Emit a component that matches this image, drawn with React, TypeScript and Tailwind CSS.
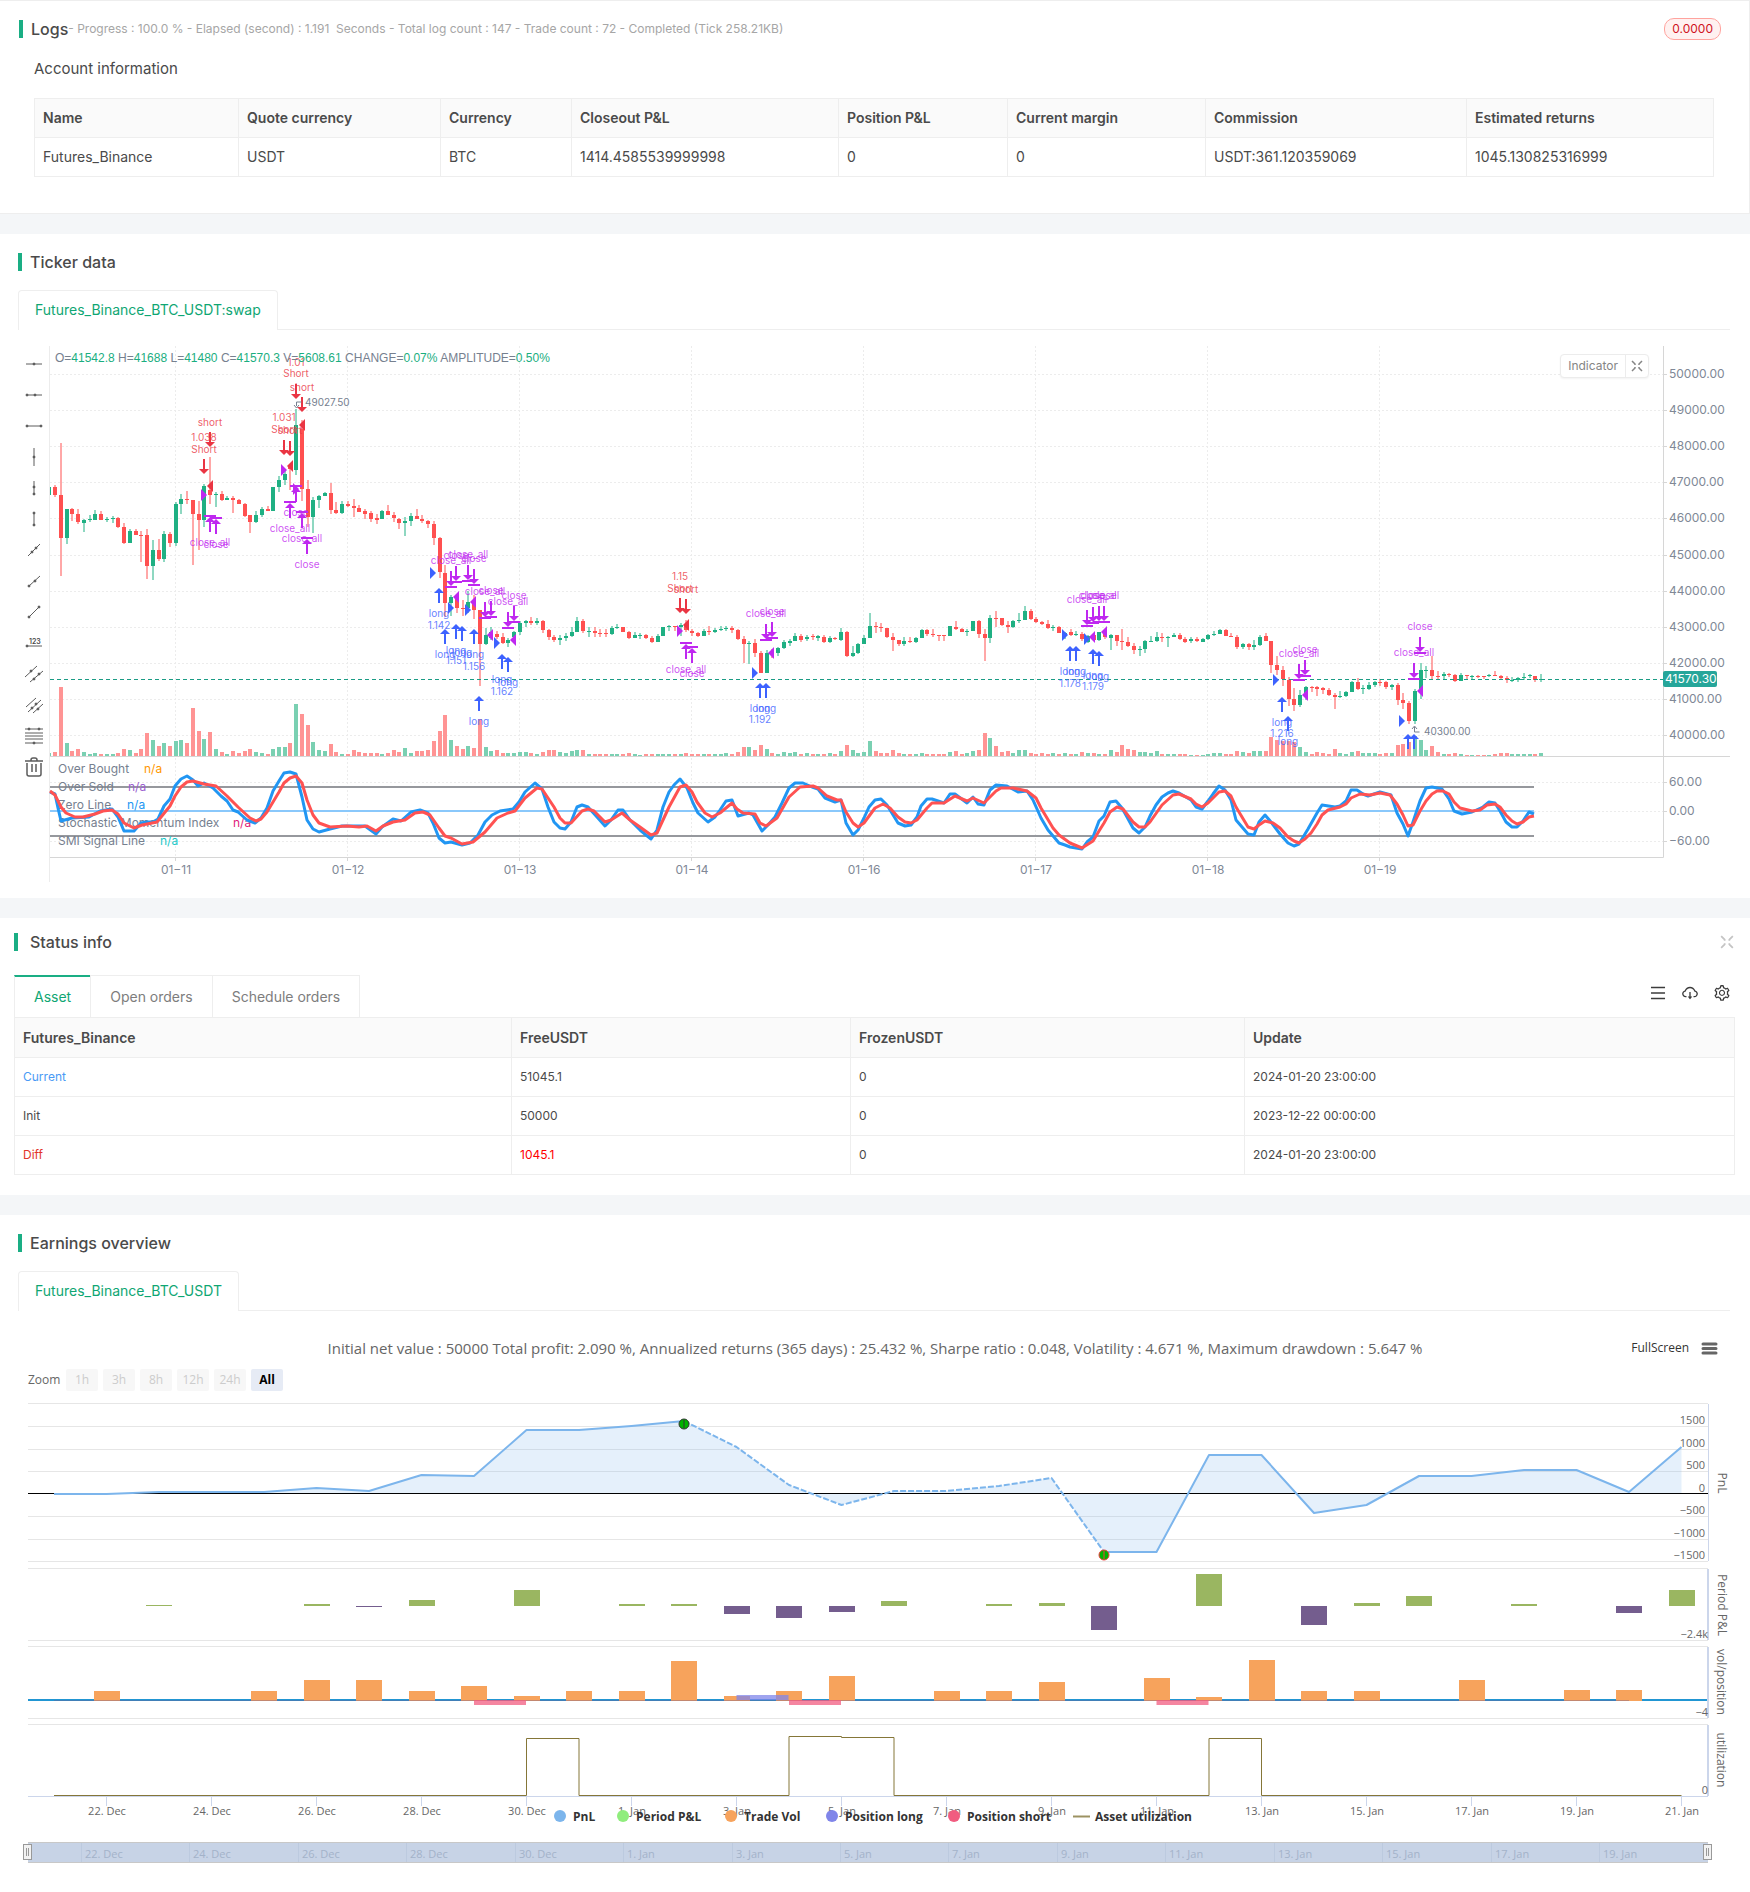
import { ReactNode } from "react";
import {
  AiOutlineCloudDownload,
  AiOutlineMenu,
  AiOutlineSetting,
} from "react-icons/ai";

type Candle = [
  up: number,
  high: number,
  top: number,
  bottom: number,
  low: number,
  volume: number
];

type Signal = {
  x: number;
  y: number;
  kind: "short" | "long" | "closeUp" | "closeDown";
  labels: [string, number][];
};

const CANDLE_STEP = 5.737;
const CANDLE_START = 49.5;
const VOLUME_BASE = 416;

const candles: Candle[] = [
  [1, 147, 147, 155, 155, 3], [0, 145, 147, 155, 157, 4], [0, 103, 155, 198, 236, 69], [1, 169, 169, 198, 204, 13],
  [0, 168, 169, 174, 181, 5], [0, 169, 174, 182, 184, 7], [1, 179, 180, 183, 192, 4], [1, 175, 179, 180, 182, 2],
  [1, 170, 174, 180, 180, 3], [0, 171, 174, 180, 180, 2], [1, 177, 179, 180, 182, 2], [1, 176, 178, 179, 183, 2],
  [0, 177, 178, 187, 188, 3], [0, 183, 187, 203, 204, 7], [1, 189, 191, 203, 203, 6], [0, 189, 191, 195, 195, 3],
  [0, 191, 195, 196, 222, 7], [0, 189, 195, 226, 239, 23], [1, 200, 210, 226, 240, 16], [0, 199, 210, 219, 221, 10],
  [1, 191, 194, 219, 222, 13], [0, 192, 194, 203, 207, 10], [1, 162, 164, 203, 206, 15], [1, 154, 159, 164, 174, 16],
  [0, 151, 159, 160, 164, 13], [0, 160, 160, 174, 225, 48], [0, 161, 174, 180, 210, 25], [1, 144, 146, 180, 187, 17],
  [0, 117, 150, 155, 164, 24], [1, 152, 154, 155, 167, 7], [0, 151, 154, 160, 161, 4], [1, 156, 158, 160, 160, 2],
  [0, 156, 158, 160, 173, 5], [0, 159, 160, 164, 164, 3], [0, 163, 164, 176, 177, 5], [0, 175, 175, 182, 193, 7],
  [1, 171, 175, 182, 183, 4], [1, 167, 169, 175, 177, 3], [0, 166, 169, 171, 171, 2], [1, 147, 147, 171, 171, 7],
  [1, 136, 140, 147, 152, 9], [1, 131, 134, 140, 145, 9], [0, 125, 126, 129, 150, 13], [1, 69, 85, 130, 135, 52],
  [0, 80, 89, 149, 161, 42], [0, 140, 149, 177, 187, 31], [1, 157, 160, 177, 193, 14], [1, 155, 156, 160, 168, 6],
  [1, 152, 153, 156, 156, 5], [0, 143, 153, 170, 174, 12], [0, 162, 170, 173, 174, 4], [1, 161, 164, 173, 174, 2],
  [0, 161, 164, 166, 167, 2], [0, 159, 166, 168, 177, 6], [0, 165, 168, 172, 172, 4], [0, 169, 171, 174, 179, 3],
  [0, 171, 173, 179, 182, 3], [0, 174, 178, 180, 184, 3], [1, 170, 171, 179, 179, 2], [0, 165, 171, 175, 175, 3],
  [0, 172, 175, 178, 182, 6], [0, 178, 179, 183, 189, 4], [1, 177, 181, 183, 196, 8], [1, 173, 176, 181, 186, 3],
  [0, 169, 176, 179, 179, 5], [0, 175, 179, 181, 183, 5], [0, 180, 181, 184, 188, 6], [0, 181, 184, 198, 205, 15],
  [0, 197, 198, 232, 238, 25], [0, 225, 233, 263, 277, 41], [1, 255, 257, 263, 276, 16], [0, 256, 258, 268, 273, 10],
  [0, 260, 268, 269, 276, 7], [1, 251, 262, 268, 273, 10], [0, 255, 262, 270, 279, 8], [0, 270, 270, 304, 346, 37],
  [1, 288, 295, 304, 305, 9], [1, 287, 292, 298, 300, 5], [0, 291, 294, 297, 299, 6], [0, 293, 297, 303, 304, 3],
  [1, 298, 300, 303, 307, 3], [1, 291, 292, 297, 297, 3], [1, 281, 283, 292, 295, 4], [1, 280, 281, 283, 287, 4],
  [0, 277, 281, 283, 285, 3], [1, 278, 281, 283, 285, 2], [0, 280, 281, 290, 293, 4], [0, 289, 290, 297, 300, 6],
  [0, 295, 297, 300, 302, 6], [1, 295, 298, 300, 305, 4], [1, 293, 296, 298, 301, 3], [1, 287, 292, 296, 297, 5],
  [1, 277, 281, 292, 292, 6], [0, 279, 281, 291, 293, 6], [1, 287, 291, 292, 297, 2], [0, 287, 291, 293, 297, 2],
  [0, 289, 293, 294, 297, 2], [0, 289, 293, 294, 297, 2], [1, 286, 288, 294, 295, 2], [1, 284, 287, 288, 289, 2],
  [0, 287, 287, 292, 292, 2], [0, 291, 292, 298, 299, 3], [1, 292, 295, 298, 298, 2], [1, 293, 295, 296, 299, 1],
  [0, 294, 295, 298, 299, 2], [0, 296, 298, 302, 303, 2], [1, 294, 296, 302, 302, 2], [1, 287, 287, 296, 296, 2],
  [1, 285, 286, 287, 291, 2], [0, 286, 286, 287, 291, 2], [1, 283, 285, 287, 296, 2], [0, 280, 285, 290, 292, 3],
  [0, 289, 291, 293, 296, 2], [0, 292, 293, 296, 297, 2], [1, 289, 291, 296, 296, 2], [0, 286, 291, 292, 295, 2],
  [1, 288, 290, 292, 293, 2], [1, 286, 289, 290, 291, 2], [1, 286, 288, 289, 291, 3], [0, 286, 288, 290, 293, 2],
  [0, 289, 290, 299, 300, 4], [0, 296, 299, 304, 323, 9], [1, 301, 303, 304, 324, 9], [0, 299, 303, 313, 317, 6],
  [0, 311, 313, 333, 333, 11], [1, 310, 313, 333, 333, 7], [0, 309, 312, 314, 318, 3], [1, 307, 308, 313, 316, 2],
  [1, 300, 302, 308, 309, 4], [1, 299, 301, 303, 306, 3], [1, 293, 296, 301, 301, 4], [0, 294, 296, 300, 302, 2],
  [1, 295, 297, 299, 301, 3], [0, 294, 296, 297, 300, 2], [1, 295, 296, 298, 301, 2], [0, 295, 297, 302, 303, 2],
  [1, 296, 298, 302, 303, 3], [0, 297, 298, 299, 300, 2], [1, 288, 292, 300, 301, 5], [0, 291, 292, 316, 317, 11],
  [1, 306, 313, 316, 317, 6], [1, 303, 304, 313, 314, 3], [1, 295, 298, 304, 304, 4], [1, 273, 286, 298, 298, 15],
  [0, 282, 286, 287, 293, 5], [0, 283, 287, 288, 292, 3], [0, 288, 288, 297, 298, 3], [0, 293, 297, 300, 311, 6],
  [0, 300, 300, 304, 306, 3], [1, 297, 301, 304, 306, 2], [0, 297, 301, 302, 303, 2], [1, 297, 298, 302, 303, 2],
  [1, 289, 290, 298, 298, 3], [0, 289, 290, 294, 296, 2], [0, 289, 294, 295, 297, 2], [0, 295, 295, 296, 301, 2],
  [0, 295, 295, 296, 301, 2], [1, 286, 286, 296, 296, 4], [0, 281, 287, 289, 290, 5], [0, 288, 289, 292, 292, 2],
  [1, 289, 291, 292, 296, 3], [1, 281, 281, 291, 291, 5], [0, 280, 281, 294, 298, 6], [0, 289, 294, 298, 321, 23],
  [1, 275, 278, 298, 303, 18], [0, 271, 278, 279, 287, 10], [0, 278, 278, 285, 286, 4], [0, 281, 285, 287, 293, 5],
  [1, 280, 281, 287, 288, 3], [1, 273, 280, 281, 283, 6], [1, 266, 271, 280, 280, 6], [0, 269, 271, 279, 280, 3],
  [0, 277, 279, 282, 283, 2], [0, 281, 282, 284, 285, 3], [0, 280, 284, 288, 289, 2], [1, 285, 287, 288, 291, 3],
  [0, 286, 287, 293, 293, 2], [1, 292, 293, 296, 299, 3], [0, 289, 292, 295, 296, 2], [1, 291, 294, 295, 296, 2],
  [0, 292, 294, 299, 301, 4], [1, 295, 296, 302, 303, 3], [0, 293, 295, 300, 300, 3], [1, 292, 292, 300, 301, 2],
  [0, 290, 292, 297, 299, 2], [1, 294, 295, 298, 310, 6], [0, 295, 295, 301, 306, 4], [0, 289, 301, 302, 310, 11],
  [0, 297, 302, 306, 307, 7], [0, 303, 306, 310, 314, 6], [1, 306, 309, 310, 316, 4], [1, 300, 301, 309, 313, 4],
  [1, 296, 301, 302, 302, 3], [1, 292, 297, 301, 302, 5], [0, 293, 297, 298, 302, 2], [1, 296, 297, 298, 307, 2],
  [1, 293, 295, 297, 297, 2], [0, 293, 295, 299, 300, 2], [0, 297, 299, 302, 303, 2], [1, 297, 299, 301, 303, 1],
  [0, 297, 299, 301, 302, 1], [1, 298, 299, 302, 302, 1], [1, 294, 295, 299, 300, 2], [1, 291, 294, 295, 296, 3],
  [1, 289, 290, 294, 294, 3], [0, 289, 290, 296, 296, 2], [0, 293, 296, 297, 297, 2], [0, 295, 297, 307, 309, 5],
  [1, 303, 304, 307, 309, 4], [0, 303, 304, 307, 310, 3], [1, 300, 305, 307, 310, 5], [1, 295, 297, 305, 306, 5],
  [0, 293, 296, 301, 301, 5], [0, 301, 301, 325, 333, 19], [0, 316, 325, 330, 335, 16], [0, 326, 330, 339, 346, 15],
  [0, 337, 340, 359, 366, 15], [0, 348, 359, 365, 371, 14], [1, 350, 355, 365, 367, 9], [1, 346, 347, 357, 360, 4],
  [0, 346, 347, 348, 352, 2], [0, 346, 347, 349, 356, 4], [0, 347, 348, 350, 354, 3], [0, 348, 350, 355, 356, 2],
  [0, 353, 355, 357, 369, 7], [1, 351, 356, 357, 358, 3], [1, 351, 352, 356, 357, 2], [1, 341, 342, 352, 352, 4],
  [0, 338, 342, 349, 350, 5], [1, 345, 348, 349, 354, 3], [1, 342, 345, 349, 350, 3], [1, 341, 342, 345, 347, 3],
  [0, 339, 342, 343, 346, 2], [0, 341, 342, 347, 349, 3], [1, 344, 345, 347, 350, 3], [0, 343, 345, 360, 365, 11],
  [0, 353, 360, 363, 369, 12], [0, 361, 363, 381, 384, 14], [1, 349, 351, 381, 384, 20], [1, 323, 330, 351, 359, 16],
  [1, 326, 330, 331, 338, 6], [0, 316, 330, 336, 340, 10], [0, 331, 336, 337, 339, 4], [1, 332, 334, 336, 340, 2],
  [0, 333, 334, 335, 337, 2], [0, 334, 335, 341, 342, 3], [1, 333, 335, 341, 341, 2], [0, 335, 335, 336, 339, 1],
  [1, 335, 336, 337, 339, 1], [0, 335, 336, 337, 338, 1], [0, 336, 336, 337, 339, 1], [1, 334, 335, 336, 337, 1],
  [0, 331, 335, 336, 336, 2], [0, 335, 336, 338, 339, 3], [0, 336, 338, 340, 343, 3], [1, 337, 340, 341, 342, 2],
  [1, 337, 338, 340, 342, 2], [1, 333, 337, 338, 340, 2], [1, 334, 335, 336, 338, 2], [0, 336, 336, 340, 342, 2],
  [1, 334, 339, 340, 342, 3],
];

const smiLine =
  "50,452 55,454 58,468 61,481 72,478 89,477 100,471 112,469 118,477 124,491 134,491 141,483 147,482 153,482 158,479 164,466 170,459 175,446 181,439 187,436 193,440 198,446 204,443 213,448 221,456 227,461 233,470 238,472 247,480 255,483 261,478 267,468 273,451 279,441 284,433 290,432 296,434 302,457 307,480 313,489 319,492 330,489 342,486 353,486 365,486 376,494 382,487 393,479 401,481 411,472 420,470 428,473 433,483 439,498 445,503 451,502 462,505 470,503 478,495 485,482 492,475 500,471 513,469 519,462 525,452 535,443 542,449 548,467 554,482 560,488 565,489 571,482 577,467 582,465 588,467 597,477 605,486 611,480 618,470 623,470 630,480 640,490 646,495 651,499 657,490 663,467 669,452 674,445 680,439 687,448 693,463 698,473 708,482 715,477 720,470 726,461 732,460 738,476 749,473 753,475 762,491 768,485 775,477 782,463 789,448 795,443 803,443 812,447 818,449 825,458 835,462 841,460 846,483 853,495 858,490 864,478 869,467 875,460 881,459 887,465 898,483 905,486 911,485 917,477 921,466 927,459 932,459 944,463 950,454 955,454 967,463 973,457 978,464 984,465 990,450 996,445 1007,446 1018,452 1027,451 1033,460 1041,478 1048,490 1059,503 1065,505 1070,507 1082,509 1087,502 1093,497 1099,481 1104,476 1110,462 1116,461 1122,468 1127,477 1133,488 1139,493 1145,487 1150,476 1156,465 1162,457 1168,453 1173,451 1179,453 1191,460 1196,467 1202,469 1208,461 1213,454 1219,446 1225,450 1231,460 1236,480 1242,487 1248,494 1254,495 1259,482 1265,475 1271,482 1280,494 1288,503 1294,506 1299,504 1308,489 1317,473 1322,465 1335,467 1340,466 1346,461 1351,450 1357,450 1363,454 1368,456 1380,452 1391,455 1397,473 1403,484 1408,496 1413,482 1420,461 1426,448 1432,447 1442,449 1449,459 1454,471 1462,474 1472,472 1483,467 1489,462 1495,463 1500,471 1506,482 1512,487 1517,487 1523,481 1529,472 1534,474";

const signalLine =
  "50,451 55,455 61,467 66,473 75,477 83,477 95,474 103,471 112,470 118,474 124,483 134,488 142,485 157,482 170,466 175,456 181,447 187,442 193,441 204,444 216,446 227,456 238,467 250,478 256,481 261,479 267,472 279,452 284,443 290,438 296,436 302,443 307,460 313,475 319,483 330,487 347,486 359,487 367,486 376,491 383,486 393,482 405,480 415,473 423,472 430,475 439,488 445,496 451,498 462,504 473,502 485,492 497,478 508,473 515,471 525,458 537,448 542,449 554,467 560,478 565,483 571,483 582,471 588,469 594,471 605,482 611,480 622,473 630,480 640,487 651,495 657,493 669,467 680,447 686,445 692,452 697,462 705,473 712,477 720,473 732,463 737,469 743,473 755,474 760,483 766,486 777,478 789,457 800,447 813,446 818,448 827,456 837,460 841,460 846,472 853,483 858,487 864,483 875,468 883,464 890,468 898,477 905,482 911,483 917,480 927,468 932,463 944,463 955,456 967,461 973,458 984,463 996,451 1001,448 1013,448 1027,451 1036,458 1041,468 1053,488 1059,495 1070,503 1082,508 1093,501 1099,491 1104,483 1110,472 1117,467 1123,469 1133,482 1139,487 1145,487 1150,482 1162,465 1173,455 1179,454 1191,459 1196,464 1202,467 1208,463 1219,452 1225,451 1231,456 1236,467 1248,487 1254,489 1259,485 1265,481 1273,483 1280,488 1288,497 1294,501 1299,503 1305,499 1311,493 1317,484 1322,475 1328,470 1340,467 1346,464 1351,458 1360,454 1370,455 1380,453 1390,455 1397,464 1403,475 1408,486 1413,485 1420,471 1426,461 1432,454 1437,451 1443,451 1449,454 1454,462 1460,468 1472,471 1480,470 1487,465 1495,464 1500,467 1506,475 1512,481 1517,484 1523,482 1529,477 1534,476";

// y is the top of the arrow, label y is the middle of the text
const signals: Signal[] = [
  { x: 204, y: 119, kind: "short", labels: [["Short", 110], ["1.038", 98]] },
  { x: 210, y: 92, kind: "short", labels: [["short", 83]] },
  { x: 284, y: 100, kind: "short", labels: [["Short", 90], ["1.031", 78]] },
  { x: 290, y: 101, kind: "short", labels: [["short", 91]] },
  { x: 296, y: 44, kind: "short", labels: [["Short", 34], ["1.01", 23]] },
  { x: 302, y: 57, kind: "short", labels: [["short", 48]] },
  { x: 680, y: 258, kind: "short", labels: [["Short", 249], ["1.15", 237]] },
  { x: 686, y: 259, kind: "short", labels: [["short", 250]] },
  { x: 210, y: 177, kind: "closeUp", labels: [["close_all", 203]] },
  { x: 216, y: 179, kind: "closeUp", labels: [["close", 205]] },
  { x: 290, y: 163, kind: "closeUp", labels: [["close_all", 189]] },
  { x: 296, y: 147, kind: "closeUp", labels: [["close", 173]] },
  { x: 302, y: 173, kind: "closeUp", labels: [["close_all", 199]] },
  { x: 307, y: 199, kind: "closeUp", labels: [["close", 225]] },
  { x: 686, y: 304, kind: "closeUp", labels: [["close_all", 330]] },
  { x: 692, y: 308, kind: "closeUp", labels: [["close", 334]] },
  { x: 451, y: 231, kind: "closeDown", labels: [["close_all", 221]] },
  { x: 456, y: 226, kind: "closeDown", labels: [["close", 216]] },
  { x: 468, y: 225, kind: "closeDown", labels: [["close_all", 215]] },
  { x: 474, y: 229, kind: "closeDown", labels: [["close", 219]] },
  { x: 485, y: 262, kind: "closeDown", labels: [["close_all", 252]] },
  { x: 491, y: 261, kind: "closeDown", labels: [["close", 251]] },
  { x: 508, y: 272, kind: "closeDown", labels: [["close_all", 262]] },
  { x: 514, y: 266, kind: "closeDown", labels: [["close", 256]] },
  { x: 766, y: 284, kind: "closeDown", labels: [["close_all", 274]] },
  { x: 772, y: 282, kind: "closeDown", labels: [["close", 272]] },
  { x: 1087, y: 270, kind: "closeDown", labels: [["close_all", 260]] },
  { x: 1093, y: 267, kind: "closeDown", labels: [["close", 256]] },
  { x: 1099, y: 266, kind: "closeDown", labels: [["close_all", 256]] },
  { x: 1104, y: 266, kind: "closeDown", labels: [["close", 256]] },
  { x: 1299, y: 324, kind: "closeDown", labels: [["close_all", 314]] },
  { x: 1305, y: 320, kind: "closeDown", labels: [["close", 310]] },
  { x: 1414, y: 323, kind: "closeDown", labels: [["close_all", 313]] },
  { x: 1420, y: 297, kind: "closeDown", labels: [["close", 287]] },
  { x: 439, y: 248, kind: "long", labels: [["long", 274], ["1.142", 286]] },
  { x: 445, y: 289, kind: "long", labels: [["long", 315]] },
  { x: 456, y: 284, kind: "long", labels: [["long", 311], ["1.151", 321]] },
  { x: 462, y: 286, kind: "long", labels: [["long", 313]] },
  { x: 474, y: 289, kind: "long", labels: [["long", 315], ["1.156", 327]] },
  { x: 479, y: 356, kind: "long", labels: [["long", 382]] },
  { x: 502, y: 314, kind: "long", labels: [["long", 340], ["1.162", 352]] },
  { x: 508, y: 317, kind: "long", labels: [["long", 343]] },
  { x: 760, y: 343, kind: "long", labels: [["long", 369], ["1.192", 380]] },
  { x: 766, y: 343, kind: "long", labels: [["long", 369]] },
  { x: 1070, y: 306, kind: "long", labels: [["long", 332], ["1.178", 344]] },
  { x: 1076, y: 306, kind: "long", labels: [["long", 332]] },
  { x: 1093, y: 309, kind: "long", labels: [["long", 336], ["1.179", 347]] },
  { x: 1099, y: 311, kind: "long", labels: [["long", 337]] },
  { x: 1282, y: 357, kind: "long", labels: [["long", 383], ["1.216", 394]] },
  { x: 1288, y: 376, kind: "long", labels: [["long", 402]] },
  { x: 1408, y: 394, kind: "long", labels: [] },
  { x: 1414, y: 394, kind: "long", labels: [] },
];

const RED = "#ea3543";
const PURPLE = "#bf28f0";
const BLUE = "#3d62ff";

// [x, y, direction, color]
const fills: [number, number, 1 | -1, string][] = [
  [204, 155, 1, PURPLE], [284, 130, 1, PURPLE], [296, 149, 1, PURPLE], [680, 291, 1, PURPLE],
  [210, 146, -1, RED], [290, 126, -1, RED], [302, 85, -1, RED], [686, 285, -1, RED],
  [433, 233, 1, BLUE], [451, 268, 1, BLUE], [468, 270, 1, BLUE], [497, 303, 1, BLUE],
  [755, 333, 1, BLUE], [1065, 295, 1, BLUE], [1087, 299, 1, BLUE], [1276, 340, 1, BLUE],
  [1402, 381, 1, BLUE],
  [456, 257, -1, PURPLE], [473, 262, -1, PURPLE], [490, 295, -1, PURPLE], [513, 300, -1, PURPLE],
  [771, 313, -1, PURPLE], [1092, 297, -1, PURPLE], [1104, 292, -1, PURPLE], [1305, 355, -1, PURPLE],
  [1420, 351, -1, PURPLE],
];

const priceTicks: [string, number][] = [
  ["50000.00", 34], ["49000.00", 70], ["48000.00", 106], ["47000.00", 142],
  ["46000.00", 178], ["45000.00", 215], ["44000.00", 251], ["43000.00", 287],
  ["42000.00", 323], ["41000.00", 359], ["40000.00", 395],
  ["60.00", 442], ["0.00", 471], ["−60.00", 501],
];

const dateTicks: [string, number][] = [
  ["01−11", 176], ["01−12", 348], ["01−13", 520], ["01−14", 692],
  ["01−16", 864], ["01−17", 1036], ["01−18", 1208], ["01−19", 1380],
];

const ohlc: [string, string][] = [
  ["O=", "41542.8"], ["H=", "41688"], ["L=", "41480"], ["C=", "41570.3"],
  ["V=", "5608.61"], ["CHANGE=", "0.07%"], ["AMPLITUDE=", "0.50%"],
];

const indicatorLegend: [string, number, number, string][] = [
  ["Over Bought", 429, 144, "#ff9800"],
  ["Over Sold", 447, 128, "#9c5fd0"],
  ["Zero Line", 465, 127, "#2196f3"],
  ["Stochastic Momentum Index", 483, 233, "#e0217a"],
  ["SMI Signal Line", 501, 160, "#1cc8c8"],
];

function SignalMark({ x, y, kind, labels }: Signal) {
  const up = kind === "long" || kind === "closeUp";
  const color = kind === "short" ? RED : kind === "long" ? BLUE : PURPLE;
  const tip = up ? y : y + 15;
  const dir = up ? 1 : -1;
  const bar = up ? y - 1 : y + 16;
  return (
    <g>
      <path
        d={`M${x} ${tip + dir * 3}V${tip + dir * 15}`}
        stroke={color}
        strokeWidth="2"
      />
      <path d={`M${x} ${tip}l5 ${dir * 5}h-10z`} fill={color} />
      {kind.startsWith("close") && (
        <path d={`M${x - 6} ${bar}h12`} stroke={color} strokeWidth="2" />
      )}
      {labels.map(([text, ly]) => (
        <text
          key={text}
          x={x}
          y={ly + 3}
          fill={color}
          fillOpacity="0.8"
          fontSize="10"
          textAnchor="middle"
        >
          {text}
        </text>
      ))}
    </g>
  );
}

function TickerChart() {
  return (
    <svg
      viewBox="49 0 1701 544"
      className="block h-auto w-full"
      fontFamily="Inter, sans-serif"
    >
      <g stroke="#ececec" strokeDasharray="2 2">
        {priceTicks.map(([label, y]) => (
          <path key={label} d={`M50 ${y + 0.5}H1663`} />
        ))}
        {dateTicks.map(([label, x]) => (
          <path key={label} d={`M${x - 0.5} 6V517`} />
        ))}
      </g>
      {candles.map(([up, high, top, bottom, low, volume], i) => {
        const x = Math.round(CANDLE_START + i * CANDLE_STEP);
        const left = i === 0 ? 50 : x - 2;
        const w = i === 0 ? 1 : 4;
        return (
          <g key={i}>
            <rect x={left} y={VOLUME_BASE - volume} width={w} height={volume} fill={up ? "#7ad0b2" : "#ff9494"} />
            {i > 0 && (
              <path d={`M${x} ${high}V${low}`} stroke={up ? "#1fb083" : "#ff5050"} />
            )}
            <rect x={left} y={top} width={w} height={bottom - top} fill={up ? "#1fb083" : "#ff5050"} />
          </g>
        );
      })}

      <path d="M50 339.5H1663" stroke="#1b9c85" strokeDasharray="4 3" />
      <path d="M49.5 6V542" stroke="#ececec" />
      <path d="M50 416.5H1730M50 517.5H1663.5V6" fill="none" stroke="#d6d6d6" />
      <g stroke="#d6d6d6">
        {priceTicks.map(([label, y]) => (
          <path key={label} d={`M1664 ${y + 0.5}h3`} />
        ))}
        {dateTicks.map(([label, x]) => (
          <path key={label} d={`M${x - 0.5} 518v3`} />
        ))}
      </g>

      <path d="M50 447H1534M50 496H1534" stroke="#96989d" strokeWidth="2" />
      <path d="M50 471H1534" stroke="#8ac8fb" strokeWidth="2" />
      <g fill="#76808f" fontSize="12">
        {indicatorLegend.map(([label, y, x, color]) => (
          <g key={label}>
            <text x="58" y={y + 4}>{label}</text>
            <text x={x} y={y + 4} fill={color}>n/a</text>
          </g>
        ))}
      </g>
      <g fill="none" strokeWidth="3" strokeLinejoin="round">
        <polyline points={smiLine} stroke="#2196f3" />
        <polyline points={signalLine} stroke="#ff5252" />
      </g>

      {signals.map((signal, i) => (
        <SignalMark key={i} {...signal} />
      ))}
      {fills.map(([x, y, dir, color], i) => (
        <path key={i} d={`M${x - dir * 3} ${y - 6}l${dir * 6} 6l${dir * -6} 6z`} fill={color} />
      ))}

      <g fill="#76808f" fontSize="10">
        <path d="M296.500 66V62h5M294 65l2.500 3l2.500-3M1414.500 387v5h5M1412 389l2.500-3l2.500 3" fill="none" stroke="#76808f" />
        <text x="305" y="66">49027.50</text>
        <text x="1424" y="395">40300.00</text>
      </g>

      <text x="55" y="22" fontSize="12" fill="#76808f" fontFamily="'Liberation Sans', Arial, sans-serif">
        {ohlc.map(([name, value]) => (
          <tspan key={name}>
            {name}
            <tspan fill="#1aae7f">{value}</tspan>{" "}
          </tspan>
        ))}
      </text>

      <g fill="#808896" fontSize="12">
        {priceTicks.map(([label, y]) => (
          <text key={label} x="1669" y={y + 4}>{label}</text>
        ))}
        {dateTicks.map(([label, x]) => (
          <text key={label} x={x} y="534" textAnchor="middle">{label}</text>
        ))}
      </g>
      <rect x="1663" y="331" width="54" height="16" rx="2" fill="#26a69a" />
      <text x="1665" y="343" fontSize="12" fill="#fff">41570.30</text>
    </svg>
  );
}

const tools: [string, ReactNode][] = [
  ["Horizontal straight line", <><path d="M1 9h16" /><circle cx="9" cy="9" r="1" /></>],
  ["Horizontal ray", <><path d="M2 9h15" /><circle cx="2" cy="9" r="1" /><circle cx="10" cy="9" r="1" /></>],
  ["Horizontal segment", <><path d="M2 9h14" /><circle cx="2" cy="9" r="1" /><circle cx="16" cy="9" r="1" /></>],
  ["Vertical straight line", <><path d="M9 0v18" /><circle cx="9" cy="9" r="1" /></>],
  ["Vertical ray", <><path d="M9 2v14" /><circle cx="9" cy="8" r="1" /><circle cx="9" cy="15" r="1" /></>],
  ["Vertical segment", <><path d="M9 3v12" /><circle cx="9" cy="3" r="1" /><circle cx="9" cy="15" r="1" /></>],
  ["Straight line", <><path d="M3 15L15 3" /><circle cx="7" cy="11" r="1" /><circle cx="11" cy="7" r="1" /></>],
  ["Ray", <><path d="M4 14L15 4" /><circle cx="4" cy="14" r="1" /><circle cx="10" cy="9" r="1" /></>],
  ["Segment", <><path d="M4 14L14 4" /><circle cx="4" cy="14" r="1" /><circle cx="14" cy="4" r="1" /></>],
  [
    "Price line",
    <>
      <path d="M2 12h15" />
      <circle cx="2" cy="12" r="1" />
      <text x="4" y="10" fontSize="7" fontWeight="600" fill="#4a4a4a" stroke="none" fontFamily="Inter, sans-serif">123</text>
    </>,
  ],
  ["Price channel line", <><path d="M0 12L12 1M5 17L18 6" /><circle cx="6" cy="6" r="1" /><circle cx="9" cy="14" r="1" /><circle cx="14" cy="9" r="1" /></>],
  ["Parallel lines", <><path d="M1 11L11 2M3 16L16 4M8 17L18 8" /><circle cx="7" cy="12" r="1" /><circle cx="11" cy="8" r="1" /><circle cx="13" cy="13" r="1" /></>],
  ["Fibonacci line", <><path d="M0 2h18M0 6h18M0 9h18M0 12h18M0 16h18" /><circle cx="4" cy="2" r="1" /><circle cx="14" cy="2" r="1" /><circle cx="9" cy="16" r="1" /></>],
  [
    "Remove all",
    <g fill="none" strokeWidth="1.500">
      <path d="M0 3h18M6 3V2a2 2 0 0 1 2-2h2a2 2 0 0 1 2 2v1M2 5v11a2 2 0 0 0 2 2h10a2 2 0 0 0 2-2V5M7 6v8M11 6v8" />
    </g>,
  ],
];

function CompressIcon({ className }: { className: string }) {
  return (
    <svg viewBox="0 0 12 12" className={className} fill="none" stroke="currentColor" strokeWidth="1.500">
      <path d="M1 1l3 3v1M11 1L8 4v1M1 11l3-3V7M11 11L8 8V7" />
    </svg>
  );
}

function SectionTitle({ children }: { children: ReactNode }) {
  return (
    <h2 className="flex h-[18px] items-center border-l-4 border-[#1aae84] pl-2 text-base font-medium text-[#4a4a4a]">
      {children}
    </h2>
  );
}

function CardTab({ label }: { label: string }) {
  return (
    <div role="tablist" className="mr-5 ml-[18px] flex border-b border-[#eeeeee]">
      <button
        role="tab"
        aria-selected="true"
        className="-mb-px h-10 rounded-t border border-b-0 border-[#eeeeee] bg-white px-4 pb-0.5 text-sm text-[#0fa673]"
      >
        {label}
      </button>
    </div>
  );
}

const accountColumns: [string, string, string][] = [
  ["Name", "Futures_Binance", "w-[204px]"],
  ["Quote currency", "USDT", "w-[202px]"],
  ["Currency", "BTC", "w-[131px]"],
  ["Closeout P&L", "1414.4585539999998", "w-[267px]"],
  ["Position P&L", "0", "w-[169px]"],
  ["Current margin", "0", "w-[198px]"],
  ["Commission", "USDT:361.120359069", "w-[261px]"],
  ["Estimated returns", "1045.130825316999", "w-[247px]"],
];

const assetRows = [
  { name: "Current", free: "51045.1", frozen: "0", update: "2024-01-20 23:00:00", nameColor: "text-[#4a9af5]", freeColor: "" },
  { name: "Init", free: "50000", frozen: "0", update: "2023-12-22 00:00:00", nameColor: "", freeColor: "" },
  { name: "Diff", free: "1045.1", frozen: "0", update: "2024-01-20 23:00:00", nameColor: "text-[#e2352b]", freeColor: "text-[#ff0000]" },
];

function LogsSection() {
  return (
    <section className="border border-l-0 border-[#eeeeee] bg-white pb-9">
      <div className="flex items-center justify-between pt-[17px] pr-7 pl-[19px]">
        <div className="flex items-center">
          <SectionTitle>Logs</SectionTitle>
          <span className="text-xs whitespace-pre text-[#a6a6a6]">
            - Progress : 100.0 % - Elapsed (second) : 1.191  Seconds - Total log count : 147 - Trade count : 72 - Completed (Tick 258.21KB)
          </span>
        </div>
        <span className="flex h-[22px] items-center rounded-[10px] border border-[#ffa39e] bg-[#fff1f0] px-[7px] text-xs text-[#cf1322]">
          0.0000
        </span>
      </div>
      <div className="pr-9 pl-[34px]">
        <h3 className="my-[17px] text-[15px] leading-6 text-[#4a4a4a]">Account information</h3>
        <table className="w-full table-fixed border-collapse text-left text-sm text-[#4a4a4a]">
          <thead className="bg-[#fafafa]">
            <tr className="h-[39px]">
              {accountColumns.map(([name, , width]) => (
                <th key={name} className={`${width} border border-[#eeeeee] px-2 font-semibold`}>
                  {name}
                </th>
              ))}
            </tr>
          </thead>
          <tbody>
            <tr className="h-[39px]">
              {accountColumns.map(([name, value]) => (
                <td key={name} className="border border-[#eeeeee] px-2">
                  {value}
                </td>
              ))}
            </tr>
          </tbody>
        </table>
      </div>
    </section>
  );
}

function TickerSection() {
  return (
    <section className="bg-white pt-[19px]">
      <div className="pb-[19px] pl-[18px]">
        <SectionTitle>Ticker data</SectionTitle>
      </div>
      <CardTab label="Futures_Binance_BTC_USDT:swap" />
      <div className="flex pt-[10px] pb-3.5">
        <div className="flex w-[49px] shrink-0 flex-col pt-2 pl-[19px]">
          {tools.map(([label, icon]) => (
            <button key={label} aria-label={label} className="flex h-[31px] items-center justify-center">
              <svg viewBox="0 0 18 18" className="size-[18px] overflow-visible" fill="#4a4a4a" stroke="#5c5c5c" strokeWidth="1">
                {icon}
              </svg>
            </button>
          ))}
        </div>
        <div className="relative min-w-0 flex-1">
          <TickerChart />
          <div className="absolute top-[14px] right-[101px] flex h-6 rounded border border-[#ececec] bg-white text-xs text-[#858585] shadow-xs">
            <button className="border-r border-[#ececec] px-[7px]">Indicator</button>
            <button aria-label="Exit full screen" className="flex items-center px-[5px]">
              <CompressIcon className="size-3" />
            </button>
          </div>
        </div>
      </div>
    </section>
  );
}

function StatusSection() {
  return (
    <section className="bg-white pt-[15px] pr-4 pb-5 pl-[14px]">
      <div className="flex items-center justify-between">
        <h2 className="flex h-[18px] items-center border-l-4 border-[#1aae84] pl-3 text-base font-medium text-[#4a4a4a]">
          Status info
        </h2>
        <button aria-label="Exit full screen" className="text-[#c4c4c4]">
          <CompressIcon className="size-[14px]" />
        </button>
      </div>
      <div className="mt-6 flex items-start justify-between">
        <div role="tablist" className="flex h-[42px] border-r border-[#eeeeee] text-sm text-[#7d7d7d]">
          <button role="tab" aria-selected="true" className="border-t-2 border-l border-t-[#1aae84] border-l-[#eeeeee] px-[19px] text-[#0fa673]">
            Asset
          </button>
          <button role="tab" className="border-t border-l border-[#eeeeee] px-[19px]">
            Open orders
          </button>
          <button role="tab" className="border-t border-l border-[#eeeeee] px-[19px]">
            Schedule orders
          </button>
        </div>
        <div className="flex gap-3.5 pt-[9px] pr-[3px] text-lg text-[#3c3c3c]">
          <button aria-label="List"><AiOutlineMenu /></button>
          <button aria-label="Download"><AiOutlineCloudDownload /></button>
          <button aria-label="Settings"><AiOutlineSetting /></button>
        </div>
      </div>
      <table className="w-full table-fixed border-collapse text-left text-xs text-[#4a4a4a]">
        <thead className="bg-[#fafafa] text-sm">
          <tr className="h-10">
            <th className="w-[497px] border border-[#eeeeee] px-2 font-semibold">Futures_Binance</th>
            <th className="w-[339px] border border-[#eeeeee] px-2 font-semibold">FreeUSDT</th>
            <th className="w-[394px] border border-[#eeeeee] px-2 font-semibold">FrozenUSDT</th>
            <th className="w-[490px] border border-[#eeeeee] px-2 font-semibold">Update</th>
          </tr>
        </thead>
        <tbody>
          {assetRows.map((row) => (
            <tr key={row.name} className="h-[39px]">
              <td className={`border border-[#eeeeee] px-2 ${row.nameColor}`}>{row.name}</td>
              <td className={`border border-[#eeeeee] px-2 ${row.freeColor}`}>{row.free}</td>
              <td className="border border-[#eeeeee] px-2">{row.frozen}</td>
              <td className="border border-[#eeeeee] px-2">{row.update}</td>
            </tr>
          ))}
        </tbody>
      </table>
    </section>
  );
}

// Day 0 is 21 Dec, day 31 is 21 Jan
const dayX = (day: number) => 54 + day * 52.5;

const pnl = [
  94, 94, 92, 92, 92, 88, 91, 75, 76, 30, 30, 26, 21, 47, 85, 105, 91, 91, 86,
  78, 152, 152, 55, 55, 113, 105, 76, 76, 70, 70, 92, 47,
];
const periodPnl: [number, number][] = [
  [2, 1], [5, 2], [6, -1], [7, 6], [9, 16], [11, 2], [12, 2], [13, -8], [14, -12],
  [15, -6], [16, 5], [18, 2], [19, 3], [20, -24], [22, 32], [24, -19], [25, 3],
  [26, 10], [28, 2], [30, -7], [31, 16],
];
const tradeVol: [number, number][] = [
  [1, 9], [4, 9], [5, 20], [6, 20], [7, 9], [8, 14], [9, 4], [10, 9], [11, 9],
  [12, 39], [13, 4], [14, 9], [15, 24], [17, 9], [18, 9], [19, 18], [21, 22],
  [22, 3], [23, 40], [24, 9], [25, 9], [27, 20], [29, 10], [30, 10],
];
const days = [
  "22. Dec", "24. Dec", "26. Dec", "28. Dec", "30. Dec", "1. Jan", "3. Jan",
  "5. Jan", "7. Jan", "9. Jan", "11. Jan", "13. Jan", "15. Jan", "17. Jan",
  "19. Jan", "21. Jan",
];
const pnlTicks: [string, number][] = [
  ["1500", 24], ["1000", 47], ["500", 69], ["0", 92], ["−500", 114],
  ["−1000", 137], ["−1500", 159],
];
const legend: [string, number, string][] = [
  ["PnL", 560, "#7cb5ec"],
  ["Period P&L", 623, "#90ed7d"],
  ["Trade Vol", 731, "#f7a35c"],
  ["Position long", 832, "#8085e9"],
  ["Position short", 954, "#f15c80"],
];

function pnlPath(from: number, to: number) {
  return pnl
    .slice(from, to + 1)
    .map((y, i) => `${i ? "L" : "M"}${dayX(from + i)} ${y}`)
    .join("");
}

function EarningsChart() {
  return (
    <svg
      viewBox="0 0 1750 475"
      className="block h-auto w-full"
      fontFamily="'Open Sans', 'Noto Sans', sans-serif"
    >
      <path
        d="M28 3.500H1708M28 26.500H1708M28 49.500H1708M28 71.500H1708M28 116.500H1708M28 139.500H1708M28 161.500H1708M28 168.500H1708M28 240.500H1708M28 246.500H1708M28 318.500H1708M28 324.500H1708"
        stroke="#e6e6e6"
      />
      <path d="M1708.500 4V161" stroke="#ccd6eb" />
      <path d="M1708 169V240M1708 247V318M1708 325V396" stroke="#ccd6eb" strokeWidth="2" />

      <path d={`${pnlPath(0, 31)}V94H54z`} fill="#7cb5ec" fillOpacity="0.2" />
      <path d="M28 93.500H1708" stroke="#000" shapeRendering="crispEdges" />
      <g fill="none" stroke="#7cb5ec" strokeWidth="2" strokeLinejoin="round">
        <path d={pnlPath(0, 12)} />
        <path d={pnlPath(12, 20)} strokeDasharray="6 2" />
        <path d={pnlPath(20, 31)} />
      </g>
      <g fill="#00b400" strokeWidth="1">
        <circle cx="684" cy="24" r="5" stroke="#333" />
        <path d="M684 20v8" stroke="#333" />
        <circle cx="1104" cy="155" r="5" stroke="#f03c3c" />
        <path d="M1104 151v8" stroke="#f03c3c" />
      </g>

      {periodPnl.map(([day, h]) => (
        <rect
          key={day}
          x={Math.round(dayX(day) - 13)}
          y={h > 0 ? 206 - h : 206}
          width="26"
          height={Math.abs(h)}
          fill={h > 0 ? "#9ab661" : "#745d8e"}
        />
      ))}

      <path d="M28 300H1707" stroke="#2196d3" strokeWidth="2" />
      {tradeVol.map(([day, h]) => (
        <rect key={day} x={Math.round(dayX(day) - 13)} y={301 - h - 1} width="26" height={h + 1} fill="#f7a35c" />
      ))}
      <path d="M54 300.500H1629" stroke="#745d8e" strokeOpacity="0.4" />
      <rect x={dayX(13)} y="295" width="52" height="5" fill="#8085e9" fillOpacity="0.75" />
      {[8, 14, 21].map((day) => (
        <rect key={day} x={dayX(day)} y="300" width="52" height="5" fill="#f15c80" fillOpacity="0.75" />
      ))}

      <path d="M28 396.500H1708" stroke="#ccd6eb" />
      <path
        d={`M54 395.500H${dayX(9)}V338.500H${dayX(10)}V395.500H${dayX(14)}V336.500H${dayX(15)}V337.500H${dayX(16)}V395.500H${dayX(22)}V338.500H${dayX(23)}V395.500H${dayX(31)}`}
        fill="none"
        stroke="#857638"
      />

      <g fill="#666" fontSize="11" textAnchor="middle">
        {days.map((day, i) => (
          <g key={day}>
            <path d={`M${106.5 + i * 105} 397v9`} stroke="#ccd6eb" />
            <text x={107 + i * 105} y="415">{day}</text>
          </g>
        ))}
      </g>
      <g fill="#666" fontSize="11" textAnchor="end">
        {pnlTicks.map(([label, y]) => (
          <text key={label} x="1705" y={y}>{label}</text>
        ))}
        <text x="1708" y="238">−2.4k</text>
        <text x="1708" y="316">−4</text>
        <text x="1708" y="394">0</text>
      </g>
      <g fill="#666" fontSize="12" textAnchor="middle">
        <text transform="translate(1718 83) rotate(90)">PnL</text>
        <text transform="translate(1718 205) rotate(90)">Period P&amp;L</text>
        <text transform="translate(1717 282) rotate(90)">vol/position</text>
        <text transform="translate(1717 360) rotate(90)">utilization</text>
      </g>

      <g fill="#333" fontSize="12" fontWeight="700">
        {legend.map(([label, x, color]) => (
          <g key={label}>
            <circle cx={x} cy="416" r="6" fill={color} />
            <text x={x + 13} y="421">{label}</text>
          </g>
        ))}
        <path d="M1073 416.500h17" stroke="#9c9262" strokeWidth="2" />
        <text x="1095" y="421">Asset utilization</text>
      </g>

      <rect x="28" y="442" width="1680" height="21" fill="#c7d3e6" />
      <path d="M28 442.500H1708M28 462.500H1708" stroke="#c8c8c8" />
      <g fill="#a3b2c9" fontSize="11">
        {days.slice(0, 15).map((day, i) => (
          <g key={day}>
            <path d={`M${Math.round(81 + i * 108.43) + 0.5} 443v19`} stroke="#bccadf" />
            <text x={Math.round(85 + i * 108.43)} y="458">{day}</text>
          </g>
        ))}
      </g>
      {[27, 1707].map((x) => (
        <g key={x} stroke="#999">
          <rect x={x - 3.5} y="444.500" width="8" height="15" fill="#f2f2f2" />
          <path d={`M${x - 0.5} 448v8M${x + 1.5} 448v8`} />
        </g>
      ))}
    </svg>
  );
}

function EarningsSection() {
  return (
    <section className="bg-white pt-[19px] pb-[17px]">
      <div className="pb-[19px] pl-[18px]">
        <SectionTitle>Earnings overview</SectionTitle>
      </div>
      <CardTab label="Futures_Binance_BTC_USDT" />
      <div className="grid grid-cols-[1fr_auto_1fr] items-center px-8 pt-[25px] font-['Open_Sans']">
        <p className="col-start-2 text-[15px] leading-6 text-[#666666]">
          Initial net value : 50000 Total profit: 2.090 %, Annualized returns (365 days) : 25.432 %, Sharpe ratio : 0.048, Volatility : 4.671 %, Maximum drawdown : 5.647 %
        </p>
        <div className="flex items-center justify-end gap-3 text-xs text-[#333333]">
          <button>FullScreen</button>
          <button aria-label="Chart menu">
            <svg viewBox="0 0 17 13" className="h-[13px] w-[17px]" stroke="#666" strokeWidth="3" strokeLinecap="round">
              <path d="M2 2h13M2 6.500h13M2 11h13" />
            </svg>
          </button>
        </div>
      </div>
      <div className="flex items-center gap-[5px] py-[9px] pl-7 font-['Open_Sans'] text-xs">
        <span className="w-[33px] text-[#666666]">Zoom</span>
        {["1h", "3h", "8h", "12h", "24h"].map((range) => (
          <button key={range} disabled className="h-[22px] w-8 rounded-xs bg-[#f7f7f7] text-[#cccccc]">
            {range}
          </button>
        ))}
        <button className="h-[22px] w-8 rounded-xs bg-[#e6ebf5] font-bold text-black">All</button>
      </div>
      <EarningsChart />
    </section>
  );
}

export default function App() {
  return (
    <main className="flex min-h-screen flex-col gap-5 bg-[#f4f6f8] font-['Inter']">
      <LogsSection />
      <TickerSection />
      <StatusSection />
      <EarningsSection />
    </main>
  );
}
